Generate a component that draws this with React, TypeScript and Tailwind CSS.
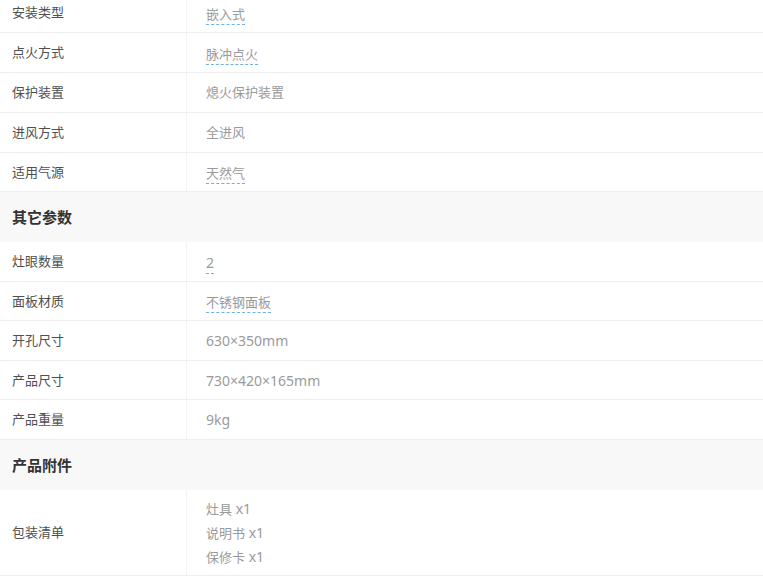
import React from "react";

type Row = { label: string; value: string | string[]; link?: boolean; h: string };

const font = { fontFamily: '"Noto Sans", "Noto Sans CJK SC", sans-serif' };

function Mixed({ s }: { s: string }) {
  const parts = s.match(/[\u3000-\u9fff]+|[^\u3000-\u9fff]+/g) || [];
  return (
    <>
      {parts.map((p, i) =>
        /[\u3000-\u9fff]/.test(p) ? (
          <span key={i}>{p}</span>
        ) : (
          <span key={i} className="text-[14px]">
            {p}
          </span>
        )
      )}
    </>
  );
}

function Value({ v, link }: { v: string | string[]; link?: boolean }) {
  if (Array.isArray(v)) {
    return (
      <div className="flex flex-col leading-[23px]">
        {v.map((s) => (
          <span key={s}>
            <Mixed s={s} />
          </span>
        ))}
      </div>
    );
  }
  if (link) {
    return (
      <span className="border-b border-dashed border-[#6fb0e0] leading-[20px] pt-[2px]">
        <Mixed s={v} />
      </span>
    );
  }
  return (
    <span>
      <Mixed s={v} />
    </span>
  );
}

function ParamRow({ r }: { r: Row }) {
  return (
    <div className={`flex border-b border-[#efefef] ${r.h}`}>
      <div className="w-[187px] shrink-0 border-r border-[#f3f3f3] flex items-center pl-3 pt-[1px] text-[13px] text-[#4f4f4f]">
        {r.label}
      </div>
      <div className="flex-1 flex items-center pl-[19px] pt-[1px] text-[13px] text-[#9a9a9a]">
        <Value v={r.value} link={r.link} />
      </div>
    </div>
  );
}

function Header({ title }: { title: string }) {
  return (
    <div className="h-[50px] bg-[#f8f8f8] flex items-center pl-3 text-[15px] font-bold text-[#333]">
      {title}
    </div>
  );
}

const sec1: Row[] = [
  { label: "安装类型", value: "嵌入式", link: true, h: "h-[40px]" },
  { label: "点火方式", value: "脉冲点火", link: true, h: "h-[40px]" },
  { label: "保护装置", value: "熄火保护装置", h: "h-[40px]" },
  { label: "进风方式", value: "全进风", h: "h-[40px]" },
  { label: "适用气源", value: "天然气", link: true, h: "h-[39px]" },
];

const sec2: Row[] = [
  { label: "灶眼数量", value: "2", link: true, h: "h-[40px]" },
  { label: "面板材质", value: "不锈钢面板", link: true, h: "h-[39px]" },
  { label: "开孔尺寸", value: "630×350mm", h: "h-[40px]" },
  { label: "产品尺寸", value: "730×420×165mm", h: "h-[39px]" },
  { label: "产品重量", value: "9kg", h: "h-[40px]" },
];

export default function App() {
  return (
    <div className="w-[763px] h-[576px] overflow-hidden bg-white" style={font}>
      <div className="-mt-[7px]">
        {sec1.map((r) => (
          <ParamRow key={r.label} r={r} />
        ))}
        <Header title="其它参数" />
        {sec2.map((r) => (
          <ParamRow key={r.label} r={r} />
        ))}
        <Header title="产品附件" />
        <ParamRow r={{ label: "包装清单", value: ["灶具 x1", "说明书 x1", "保修卡 x1"], h: "h-[86px]" }} />
      </div>
    </div>
  );
}
